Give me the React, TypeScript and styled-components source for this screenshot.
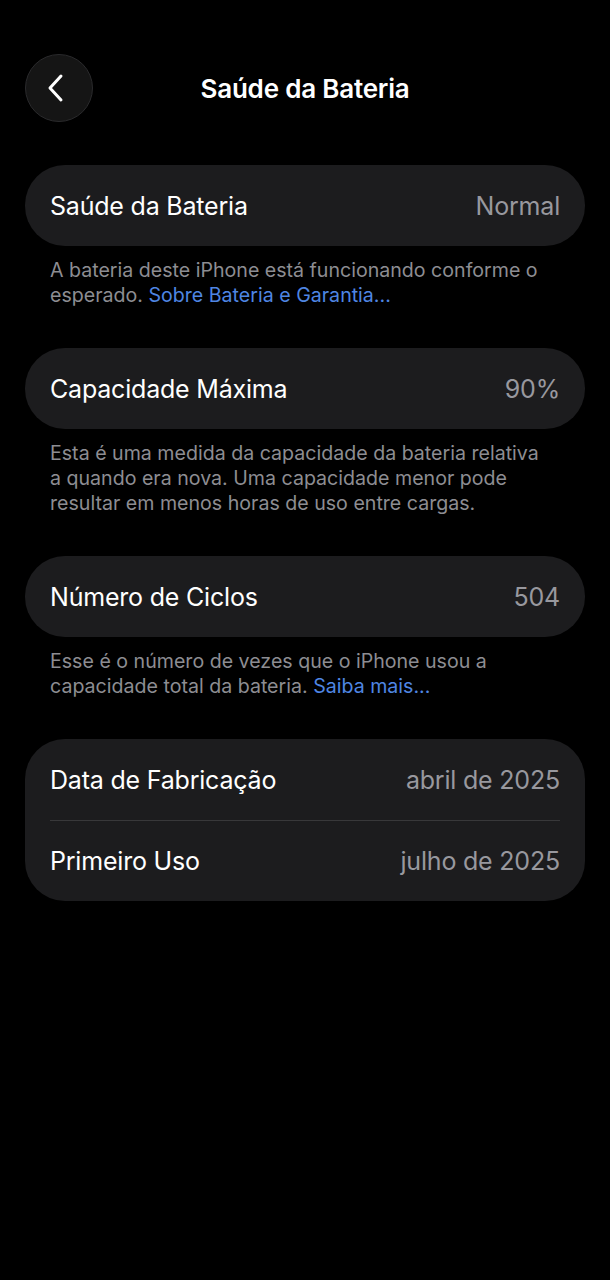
import * as React from "react";
import styled, { createGlobalStyle } from "styled-components";

const GlobalStyle = createGlobalStyle`
  html, body {
    margin: 0;
    padding: 0;
    background: #000;
  }
  body {
    font-family: Inter, "Noto Sans", sans-serif;
    -webkit-font-smoothing: antialiased;
  }
`;

const Page = styled.div`
  min-height: 1280px;
  background: #000;
  color: #fff;
  padding: 54px 25px 0;
  box-sizing: border-box;
`;

const Header = styled.div`
  position: relative;
  height: 68px;
  display: flex;
  align-items: center;
  justify-content: center;
`;

const BackButton = styled.button`
  position: absolute;
  left: 0;
  top: 0;
  width: 68px;
  height: 68px;
  border-radius: 50%;
  background: #151515;
  border: 1px solid #2a2a2c;
  box-sizing: border-box;
  display: flex;
  align-items: center;
  justify-content: center;
  padding: 0 4px 0 0;
`;

const Title = styled.h1`
  margin: 0;
  font-size: 26px;
  font-weight: 600;
  letter-spacing: -0.2px;
`;

const List = styled.div`
  display: flex;
  flex-direction: column;
  gap: 40px;
  margin-top: 43px;
`;

const Section = styled.div`
  display: flex;
  flex-direction: column;
`;

const Card = styled.div`
  background: #1c1c1e;
  border-radius: 40px;
  padding: 0 25px;
`;

const Row = styled.div<{ $divided: boolean }>`
  height: 81px;
  display: flex;
  align-items: center;
  justify-content: space-between;
  border-top: ${(p) => (p.$divided ? "1px solid #38383a" : "none")};
  box-sizing: border-box;
`;

const Label = styled.span`
  font-size: 25px;
  letter-spacing: -0.2px;
  color: #fff;
`;

const Value = styled.span`
  font-size: 25px;
  letter-spacing: -0.2px;
  color: #98989e;
`;

const Note = styled.p`
  margin: 12px 30px 0 25px;
  font-size: 19.6px;
  line-height: 25px;
  color: #8d8d92;
`;

const Link = styled.span`
  color: #4f86e3;
`;

interface IRow {
  label: string;
  value: string;
}

interface ISection {
  rows: IRow[];
  note?: React.ReactNode;
}

const sections: ISection[] = [
  {
    rows: [{ label: "Saúde da Bateria", value: "Normal" }],
    note: (
      <>
        A bateria deste iPhone está funcionando conforme o esperado.{" "}
        <Link>Sobre Bateria e Garantia...</Link>
      </>
    ),
  },
  {
    rows: [{ label: "Capacidade Máxima", value: "90%" }],
    note: (
      <>
        Esta é uma medida da capacidade da bateria relativa a quando era nova.
        Uma capacidade menor pode resultar em menos horas de uso entre cargas.
      </>
    ),
  },
  {
    rows: [{ label: "Número de Ciclos", value: "504" }],
    note: (
      <>
        Esse é o número de vezes que o iPhone usou a capacidade total da
        bateria. <Link>Saiba mais...</Link>
      </>
    ),
  },
  {
    rows: [
      { label: "Data de Fabricação", value: "abril de 2025" },
      { label: "Primeiro Uso", value: "julho de 2025" },
    ],
  },
];

export default function App() {
  return (
    <Page>
      <GlobalStyle />
      <Header>
        <BackButton aria-label="Voltar">
          <svg width="26" height="30" viewBox="0 0 26 30" fill="none">
            <path
              d="M17 3L6 15L17 27"
              stroke="#fff"
              strokeWidth="3"
              strokeLinecap="round"
              strokeLinejoin="round"
            />
          </svg>
        </BackButton>
        <Title>Saúde da Bateria</Title>
      </Header>
      <List>
        {sections.map((s, i) => (
          <Section key={i}>
            <Card>
              {s.rows.map((r, j) => (
                <Row key={r.label} $divided={j > 0}>
                  <Label>{r.label}</Label>
                  <Value>{r.value}</Value>
                </Row>
              ))}
            </Card>
            {s.note && <Note>{s.note}</Note>}
          </Section>
        ))}
      </List>
    </Page>
  );
}
